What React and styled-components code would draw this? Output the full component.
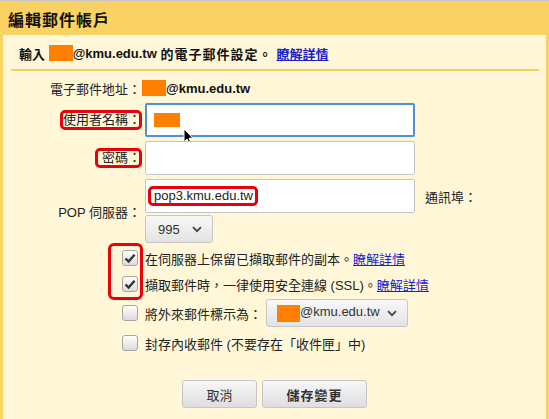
import React from 'react';
import styled, { createGlobalStyle } from 'styled-components';

const GlobalStyle = createGlobalStyle`
  html, body {
    margin: 0;
    padding: 0;
  }
  body {
    background: #fad163;
    font-family: "Liberation Sans", "Noto Sans CJK TC", sans-serif;
    font-size: 13px;
    color: #222;
  }
`;

const Frame = styled.div`
  width: 549px;
  height: 419px;
  box-sizing: border-box;
  border-top: 1px solid #c6c6c6;
  background: #fad163;
  padding: 0 3px;
  display: flex;
  flex-direction: column;
  overflow: hidden;
`;

const Header = styled.div`
  height: 34px;
  box-sizing: border-box;
  padding: 2px 0 0 5px;
  display: flex;
  align-items: center;
  font-size: 16px;
  font-weight: bold;
  letter-spacing: 1px;
  color: #111;
`;

const Panel = styled.div`
  flex: 1;
  background: #fff7d7;
  position: relative;
`;

const Intro = styled.div`
  height: 34px;
  box-sizing: border-box;
  padding: 2px 16px 0;
  display: flex;
  align-items: center;
  font-weight: bold;
  color: #111;
  white-space: pre;
`;

const Spaced = styled.span`
  letter-spacing: 1px;
`;

const Divider = styled.div`
  height: 2px;
  margin: 0 7px 0 8px;
  background: #f8cd5e;
`;

const Redacted = styled.span`
  display: inline-block;
  width: ${(p) => p.$w || 24}px;
  height: ${(p) => p.$h || 16}px;
  background: #ff7f00;
  vertical-align: middle;
`;

const Link = styled.a`
  color: #1a22cc;
  text-decoration: underline;
  cursor: pointer;
  margin-left: ${(p) => p.$gap || 0}px;
`;

const Form = styled.div`
  padding-top: 7px;
  display: flex;
  flex-direction: column;
`;

const Row = styled.div`
  display: grid;
  grid-template-columns: 142px 1fr;
  align-items: center;
  margin-top: ${(p) => p.$top || 0}px;
  min-height: ${(p) => p.$h || 0}px;
`;

const Label = styled.div`
  text-align: right;
  white-space: nowrap;
  align-self: center;
  padding-right: 4px;
`;

const Value = styled.div`
  display: flex;
  align-items: center;
  white-space: pre;
  margin-left: ${(p) => p.$shift || 0}px;
`;

const Bold = styled.span`
  font-weight: bold;
  color: #111;
`;

const Marked = styled.span`
  position: relative;
  display: inline-block;
  line-height: 16px;

  &::after {
    content: '';
    position: absolute;
    top: -2px;
    bottom: -2px;
    left: -${(p) => p.$left || 3}px;
    right: ${(p) => (p.$right === undefined ? -1 : p.$right)}px;
    border: 3px solid #e8000b;
    border-radius: 5px;
  }
`;

const Field = styled.div`
  position: relative;
  width: 270px;
  height: 34px;
  box-sizing: border-box;
  background: #fff;
  border: ${(p) => (p.$focus ? '2px solid #4a8fe0' : '1px solid #c4c4c4')};
  border-radius: 2px;
  padding: 0 ${(p) => (p.$focus ? 7 : 8)}px;
  display: flex;
  align-items: center;
`;

const Caret = styled.span`
  width: 1px;
  height: 14px;
  background: #000;
  margin-right: -1px;
`;

const Pointer = styled.svg`
  position: absolute;
  left: 36px;
  top: 23px;
`;

const FieldStack = styled.div`
  display: flex;
  flex-direction: column;
  align-items: flex-start;
  gap: 2px;
`;

const FieldLine = styled.div`
  display: flex;
  align-items: center;
  gap: 10px;
`;

const Dropdown = styled.div`
  display: inline-flex;
  align-items: center;
  justify-content: space-between;
  width: ${(p) => p.$w}px;
  height: 28px;
  box-sizing: border-box;
  padding: 0 10px 0 ${(p) => p.$pl || 12}px;
  margin-left: ${(p) => p.$ml || 0}px;
  border: 1px solid #c6c6c6;
  border-radius: 3px;
  background: linear-gradient(#f8f8f8, #e3e3e3);
  color: #333;
  white-space: pre;
`;

const Chevron = () => (
  <svg width="10" height="7" viewBox="0 0 10 7">
    <path d="M1 1.2 L5 5.2 L9 1.2" fill="none" stroke="#444" strokeWidth="1.8" />
  </svg>
);

const CheckGroup = styled.div`
  position: relative;
  margin-top: 2px;
`;

const GroupMark = styled.div`
  position: absolute;
  left: 105px;
  top: -2px;
  width: 35px;
  height: 57px;
  box-sizing: border-box;
  border: 3px solid #e8000b;
  border-radius: 6px;
`;

const BoxCell = styled.div`
  display: flex;
  justify-content: flex-end;
  padding-right: 7px;
`;

const Box = styled.span`
  width: 16px;
  height: 16px;
  box-sizing: border-box;
  border: 1px solid #a6a6a6;
  border-radius: 3px;
  background: linear-gradient(#fefefe, #dcdcdc);
  display: flex;
  align-items: center;
  justify-content: center;
`;

const Checkbox = ({ checked }) => (
  <Box>
    {checked && (
      <svg width="12" height="11" viewBox="0 0 12 11">
        <path d="M1.5 5.5 L4.6 8.6 L10.6 1.8" fill="none" stroke="#333" strokeWidth="2.4" />
      </svg>
    )}
  </Box>
);

const Actions = styled.div`
  display: flex;
  justify-content: center;
  gap: 5px;
  margin-top: 24px;
`;

const Button = styled.button`
  width: ${(p) => p.$w}px;
  height: 28px;
  box-sizing: border-box;
  border: 1px solid #c6c6c6;
  border-radius: 3px;
  background: linear-gradient(#f7f7f7, #dedede);
  font-family: inherit;
  font-size: 13px;
  font-weight: ${(p) => (p.$primary ? 'bold' : 'normal')};
  letter-spacing: ${(p) => (p.$primary ? '1px' : '0')};
  color: #333;
  padding: 0;
`;

const CheckRow = ({ checked, children, top }) => (
  <Row $h={26} $top={top}>
    <BoxCell>
      <Checkbox checked={checked} />
    </BoxCell>
    <Value>{children}</Value>
  </Row>
);

export default function App() {
  return (
    <>
      <GlobalStyle />
      <Frame>
        <Header>編輯郵件帳戶</Header>
        <Panel>
          <Intro>
            輸入 <Redacted />
            <span>@kmu.edu.tw </span>
            <Spaced>的電子郵件設定。</Spaced>
            <Link $gap={4}>瞭解詳情</Link>
          </Intro>
          <Divider />
          <Form>
            <Row $h={20}>
              <Label>電子郵件地址：</Label>
              <Value $shift={-3}>
                <Redacted />
                <Bold>@kmu.edu.tw</Bold>
              </Value>
            </Row>
            <Row $top={5}>
              <Label>
                <Marked>使用者名稱：</Marked>
              </Label>
              <Value>
                <Field $focus>
                  <Caret />
                  <Redacted $w={26} $h={14} />
                  <Pointer width="12" height="18" viewBox="0 0 12 18">
                    <path d="M1 1 L1 14 L4 11 L6.5 16.5 L8.5 15.6 L6 10.2 L10 10.2 Z" fill="#000" stroke="#fff" strokeWidth="1" />
                  </Pointer>
                </Field>
              </Value>
            </Row>
            <Row $top={4}>
              <Label>
                <Marked $left={7}>密碼：</Marked>
              </Label>
              <Value>
                <Field />
              </Value>
            </Row>
            <Row $top={4}>
              <Label>POP 伺服器：</Label>
              <FieldStack>
                <FieldLine>
                  <Field>
                    <Marked $left={6} $right={-5}>
                      pop3.kmu.edu.tw
                    </Marked>
                  </Field>
                  <span>通訊埠：</span>
                </FieldLine>
                <Dropdown $w={68}>
                  995
                  <Chevron />
                </Dropdown>
              </FieldStack>
            </Row>
            <CheckGroup>
              <GroupMark />
              <CheckRow checked>
                在伺服器上保留已擷取郵件的副本。<Link>瞭解詳情</Link>
              </CheckRow>
              <CheckRow checked>
                擷取郵件時，一律使用安全連線 (SSL)。<Link>瞭解詳情</Link>
              </CheckRow>
            </CheckGroup>
            <Row $top={2}>
              <BoxCell>
                <Checkbox />
              </BoxCell>
              <Value>
                將外來郵件標示為：
                <Dropdown $w={142} $pl={10} $ml={4}>
                  <span>
                    <Redacted $w={23} $h={17} />
                    @kmu.edu.tw
                  </span>
                  <Chevron />
                </Dropdown>
              </Value>
            </Row>
            <CheckRow top={3}>封存內收郵件 (不要存在「收件匣」中)</CheckRow>
            <Actions>
              <Button $w={75}>取消</Button>
              <Button $w={105} $primary>
                儲存變更
              </Button>
            </Actions>
          </Form>
        </Panel>
      </Frame>
    </>
  );
}
